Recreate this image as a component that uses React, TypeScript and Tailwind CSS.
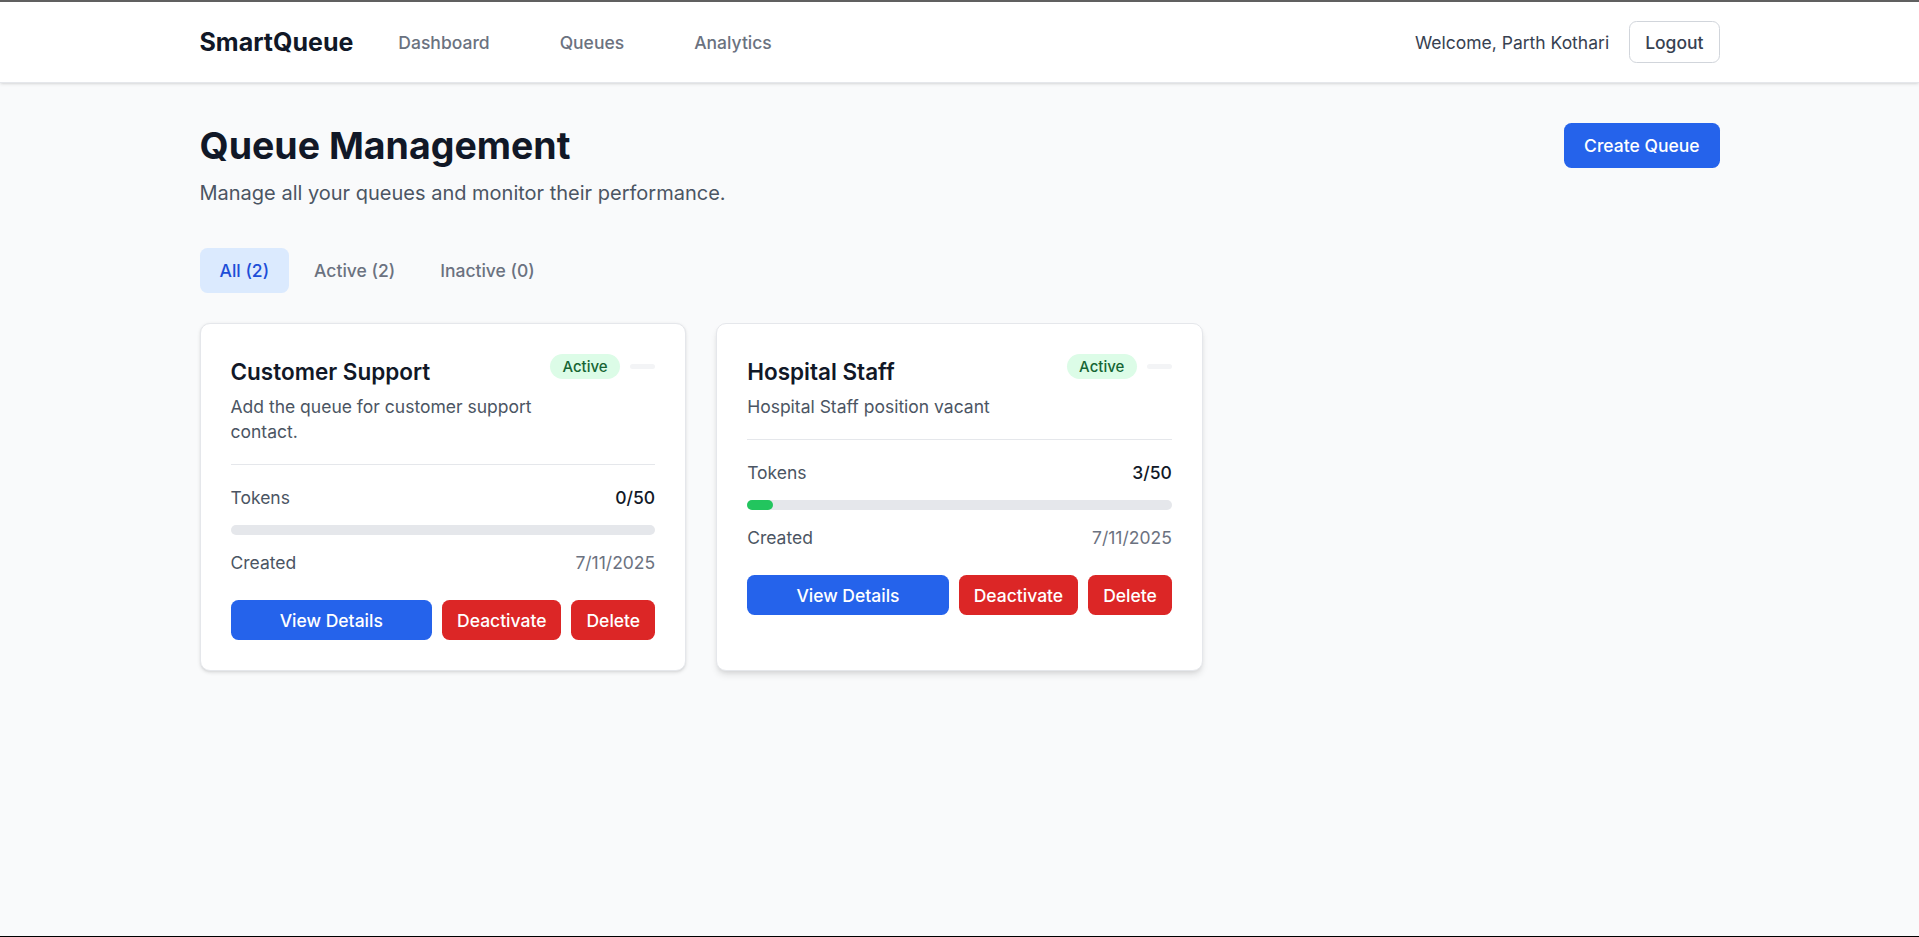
import React, { useState } from "react";

type Queue = {
  id: number;
  name: string;
  description: string;
  tokens: number;
  maxTokens: number;
  created: string;
  active: boolean;
};

const queues: Queue[] = [
  {
    id: 1,
    name: "Customer Support",
    description: "Add the queue for customer support contact.",
    tokens: 0,
    maxTokens: 50,
    created: "7/11/2025",
    active: true,
  },
  {
    id: 2,
    name: "Hospital Staff",
    description: "Hospital Staff position vacant",
    tokens: 3,
    maxTokens: 50,
    created: "7/11/2025",
    active: true,
  },
];

const Navbar = () => {
  return (
    <nav className="bg-white border-b border-[#e5e7eb] shadow-sm">
      <div className="max-w-7xl mx-auto px-8">
        <div className="flex justify-between h-16">
          <div className="flex items-center">
            <span className="text-xl font-bold text-[#111827]">SmartQueue</span>
            <div className="ml-6 flex space-x-8">
              <a className="px-3 py-2 text-sm font-medium text-[#6b7280]">Dashboard</a>
              <a className="px-3 py-2 text-sm font-medium text-[#6b7280]">Queues</a>
              <a className="px-3 py-2 text-sm font-medium text-[#6b7280]">Analytics</a>
            </div>
          </div>
          <div className="flex items-center space-x-4">
            <span className="text-sm text-[#374151]">Welcome, Parth Kothari</span>
            <button className="px-3 py-1.5 text-sm font-medium text-[#374151] border border-[#d1d5db] rounded-md bg-white">
              Logout
            </button>
          </div>
        </div>
      </div>
    </nav>
  );
};

const QueueCard = ({ queue, hovered }: { queue: Queue; hovered?: boolean }) => {
  const percent = (queue.tokens / queue.maxTokens) * 100;
  return (
    <div
      className={
        "bg-white rounded-lg border border-[#e5e7eb] p-6 " +
        (hovered ? "shadow-md" : "shadow-sm")
      }
    >
      <div className="flex justify-between items-start pb-4 border-b border-[#e5e7eb]">
        <div>
          <h3 className="text-lg font-semibold text-[#111827]">{queue.name}</h3>
          <p className="text-sm text-[#4b5563] mt-1">{queue.description}</p>
        </div>
        <div className="flex items-center space-x-2 shrink-0">
          <span className="px-2.5 py-0.5 rounded-full text-xs font-medium bg-[#dcfce7] text-[#166534]">
            {queue.active ? "Active" : "Inactive"}
          </span>
          <span className="w-5 h-1 rounded-full bg-[#f3f4f6]"></span>
        </div>
      </div>

      <div className="mt-4 space-y-3">
        <div className="flex justify-between text-sm">
          <span className="text-[#4b5563]">Tokens</span>
          <span className="font-medium text-[#111827]">
            {queue.tokens}/{queue.maxTokens}
          </span>
        </div>
        <div className="w-full h-2 bg-[#e5e7eb] rounded-full">
          <div
            className="h-2 bg-[#22c55e] rounded-full"
            style={{ width: `${percent}%` }}
          ></div>
        </div>
        <div className="flex justify-between text-sm">
          <span className="text-[#4b5563]">Created</span>
          <span className="text-[#6b7280]">{queue.created}</span>
        </div>
      </div>

      <div className="mt-5 flex space-x-2">
        <button className="flex-1 py-1.5 text-sm font-medium text-white bg-[#2563eb] rounded-md">
          View Details
        </button>
        <button className="px-3 py-1.5 text-sm font-medium text-white bg-[#dc2626] rounded-md">
          {queue.active ? "Deactivate" : "Activate"}
        </button>
        <button className="px-3 py-1.5 text-sm font-medium text-white bg-[#dc2626] rounded-md">
          Delete
        </button>
      </div>
    </div>
  );
};

const App = () => {
  const [tab, setTab] = useState("all");
  const activeCount = queues.filter((q) => q.active).length;
  const tabs = [
    { key: "all", label: `All (${queues.length})` },
    { key: "active", label: `Active (${activeCount})` },
    { key: "inactive", label: `Inactive (${queues.length - activeCount})` },
  ];

  return (
    <div className="h-screen overflow-hidden bg-[#f9fafb] border-t-2 border-b border-t-[#606060] border-b-black font-['Inter','Noto_Sans',sans-serif]">
      <div className="[zoom:1.25]">
        <Navbar />
        <main className="max-w-7xl mx-auto px-8 py-8">
          <div className="flex justify-between items-start mb-8">
            <div>
              <h1 className="text-3xl font-bold text-[#111827]">Queue Management</h1>
              <p className="mt-2 text-base text-[#4b5563]">
                Manage all your queues and monitor their performance.
              </p>
            </div>
            <button className="px-4 py-2 text-sm font-medium text-white bg-[#2563eb] rounded-md">
              Create Queue
            </button>
          </div>

          <div className="flex space-x-1 mb-6">
            {tabs.map((t) => (
              <button
                key={t.key}
                onClick={() => setTab(t.key)}
                className={
                  "px-4 py-2 text-sm font-medium rounded-md " +
                  (tab === t.key ? "bg-[#dbeafe] text-[#1d4ed8]" : "text-[#6b7280]")
                }
              >
                {t.label}
              </button>
            ))}
          </div>

          <div className="grid grid-cols-3 gap-6">
            {queues
              .filter((q) =>
                tab === "all" ? true : tab === "active" ? q.active : !q.active
              )
              .map((q) => (
                <QueueCard key={q.id} queue={q} hovered={q.id === 2} />
              ))}
          </div>
        </main>
      </div>
    </div>
  );
};

export default App;
